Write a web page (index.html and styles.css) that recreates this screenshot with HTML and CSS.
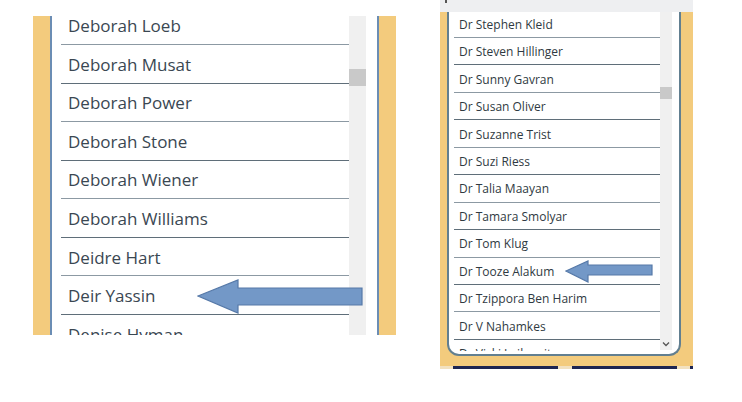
FILE: index.html
```html
<!DOCTYPE html>
<html lang="en">
<head>
    <meta charset="UTF-8">
    <meta name="viewport" content="width=device-width, initial-scale=1.0">
    <title>Name Lists</title>
    <link rel="stylesheet" href="styles.css">
</head>
<body>
    <div class="canvas">
        <!-- left screenshot: big list -->
        <section class="shot shot-left">
            <div class="frame">
                <div class="list">
                    <ul class="names">
                        <li>Deborah Loeb</li>
                        <li>Deborah Musat</li>
                        <li>Deborah Power</li>
                        <li>Deborah Stone</li>
                        <li>Deborah Wiener</li>
                        <li>Deborah Williams</li>
                        <li>Deidre Hart</li>
                        <li>Deir Yassin</li>
                        <li>Denise Hyman</li>
                    </ul>
                </div>
                <div class="scrollbar"><div class="thumb"></div></div>
                <div class="gutter"></div>
            </div>
            <svg class="arrow arrow-left" width="168" height="36" viewBox="0 0 168 36">
                <polygon points="1,17 41,1 41,9 165,9 165,26 41,26 41,34" />
            </svg>
        </section>

        <!-- right screenshot: small list -->
        <section class="shot shot-right">
            <div class="topbar"><span class="tick"></span></div>
            <div class="panel">
                <div class="frame">
                    <div class="list">
                        <ul class="names">
                            <li>Dr Stephen Kleid</li>
                            <li>Dr Steven Hillinger</li>
                            <li>Dr Sunny Gavran</li>
                            <li>Dr Susan Oliver</li>
                            <li>Dr Suzanne Trist</li>
                            <li>Dr Suzi Riess</li>
                            <li>Dr Talia Maayan</li>
                            <li>Dr Tamara Smolyar</li>
                            <li>Dr Tom Klug</li>
                            <li>Dr Tooze Alakum</li>
                            <li>Dr Tzippora Ben Harim</li>
                            <li>Dr V Nahamkes</li>
                            <li>Dr Vicki Leibowitz</li>
                        </ul>
                    </div>
                    <div class="scrollbar">
                        <div class="thumb"></div>
                        <svg class="chevron" width="8" height="6" viewBox="0 0 8 6">
                            <polyline points="1,1.5 4,4.5 7,1.5" />
                        </svg>
                    </div>
                    <div class="gutter"></div>
                </div>
            </div>
            <div class="buttons">
                <span class="btn btn-one"></span>
                <span class="btn btn-two"></span>
                <span class="btn btn-edge"></span>
            </div>
            <svg class="arrow arrow-right" width="90" height="24" viewBox="0 0 90 24">
                <polygon points="1,11 23,1 23,5 87,5 87,15 23,15 23,22" />
            </svg>
        </section>
    </div>
</body>
</html>
```

FILE: styles.css
```css
/* styles.css */

body {
    margin: 0;
    background-color: #fff;
    font-family: "Open Sans", Arial, sans-serif;
}

.canvas {
    display: flex;
    align-items: flex-start;
    width: 742px;
    height: 402px;
    overflow: hidden;
}

ul {
    list-style: none;
    margin: 0;
    padding: 0;
}

.shot {
    position: relative;
    flex: none;
}

.frame {
    display: flex;
    align-items: flex-start;
    background-color: #fff;
    overflow: hidden;
}

.list {
    flex: none;
    overflow: hidden;
}

.names li {
    box-sizing: border-box;
    display: flex;
    align-items: center;
    border-bottom: 1px solid #8c99a3;
    white-space: nowrap;
}

.names li:nth-child(even) {
    border-bottom-color: #5f6e79;
}

.scrollbar {
    position: relative;
    flex: none;
    background-color: #f0f0f0;
}

.thumb {
    position: absolute;
    left: 0;
    right: 0;
    background-color: #c9c9c9;
}

.gutter {
    flex: none;
}

.arrow {
    position: absolute;
}

.arrow polygon {
    fill: #7398c7;
    stroke: #5679a8;
    stroke-width: 1.2;
    stroke-linejoin: miter;
}

/* left shot */

.shot-left {
    margin: 16px 0 0 33px;
    width: 363px;
    height: 319px;
    background-color: #f3cb7d;
}

.shot-left .frame {
    margin-left: 17px;
    width: 325px;
    height: 319px;
    border-left: 2px solid #6b8db4;
    border-right: 2px solid #6b8db4;
}

.shot-left .list {
    width: 288px;
    height: 319px;
    padding-left: 9px;
}

.shot-left .names {
    margin-top: -9.6px;
}

.shot-left .names li {
    height: 38.57px;
    padding: 1px 0 0 7px;
    font-size: 17px;
    color: #3a4752;
}

.shot-left .scrollbar {
    width: 17px;
    height: 319px;
}

.shot-left .thumb {
    top: 53px;
    height: 17px;
}

.shot-left .gutter {
    width: 11px;
}

.arrow-left {
    left: 164px;
    top: 263px;
}

/* right shot */

.shot-right {
    margin-left: 44px;
    width: 253px;
}

.topbar {
    position: relative;
    height: 12px;
    background-color: #eeeff1;
}

.tick {
    position: absolute;
    left: 5px;
    top: 0;
    width: 2px;
    height: 3px;
    background-color: #555;
}

.panel {
    height: 354px;
    background-color: #f3cb7d;
}

.shot-right .frame {
    margin-left: 7px;
    width: 230px;
    height: 342px;
    border: 2px solid #627f90;
    border-top: none;
    border-radius: 0 0 12px 12px;
}

.shot-right .list {
    width: 206px;
    height: 339px;
    padding-left: 5px;
}

.shot-right .names {
    margin-top: -1.45px;
}

.shot-right .names li {
    height: 27.45px;
    padding: 1px 0 0 5px;
    font-size: 12px;
    color: #2f3a42;
}

.shot-right .scrollbar {
    width: 12px;
    height: 338px;
}

.shot-right .thumb {
    top: 75px;
    height: 12px;
}

.chevron {
    position: absolute;
    left: 2px;
    top: 329px;
}

.chevron polyline {
    fill: none;
    stroke: #555;
    stroke-width: 1.3;
}

.shot-right .gutter {
    width: 7px;
}

.buttons {
    position: relative;
    height: 3px;
    background-color: #f2e1bf;
}

.btn {
    position: absolute;
    top: 0;
    height: 3px;
    background-color: #1d2552;
}

.btn-one {
    left: 13px;
    width: 105px;
}

.btn-two {
    left: 132px;
    width: 105px;
}

.btn-edge {
    left: 250px;
    width: 3px;
}

.arrow-right {
    left: 125px;
    top: 260px;
}
```
